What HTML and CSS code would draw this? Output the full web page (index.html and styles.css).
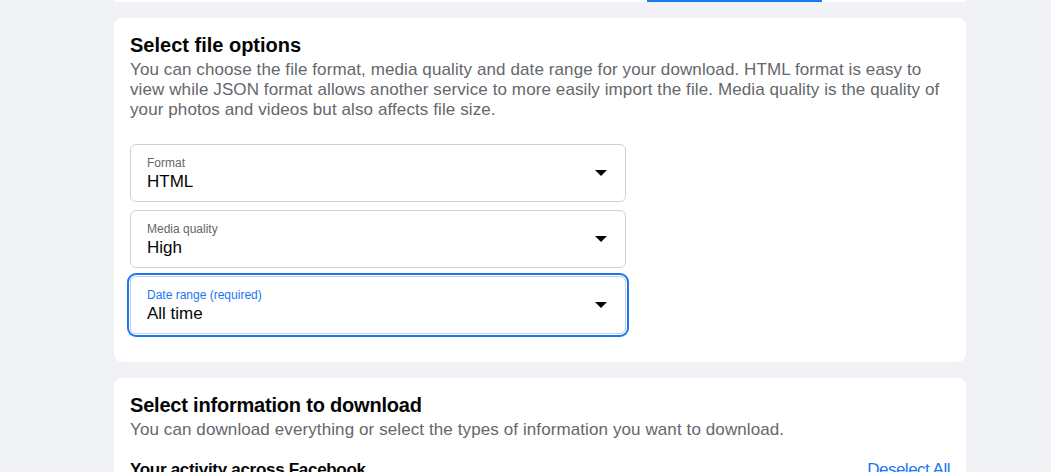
FILE: index.html
```html
<!DOCTYPE html>
<html>
<head>
<meta charset="utf-8">
<link rel="stylesheet" href="styles.css">
</head>
<body>
<div class="page">
  <div class="card top-card">
    <div class="tabs"><div class="tab-indicator"></div></div>
  </div>
  <div class="card section">
    <h2 class="title">Select file options</h2>
    <p class="desc">You can choose the file format, media quality and date range for your download. HTML format is easy to view while JSON format allows another service to more easily import the file. Media quality is the quality of your photos and videos but also affects file size.</p>
    <div class="fields">
      <div class="select">
        <div class="select-text">
          <div class="label">Format</div>
          <div class="value">HTML</div>
        </div>
        <span class="caret"></span>
      </div>
      <div class="select">
        <div class="select-text">
          <div class="label">Media quality</div>
          <div class="value">High</div>
        </div>
        <span class="caret"></span>
      </div>
      <div class="select focused">
        <div class="select-text">
          <div class="label">Date range (required)</div>
          <div class="value">All time</div>
        </div>
        <span class="caret"></span>
      </div>
    </div>
  </div>
  <div class="card section second">
    <h2 class="title title-2">Select information to download</h2>
    <p class="desc">You can download everything or select the types of information you want to download.</p>
    <div class="group-head">
      <span class="group-title">Your activity across Facebook</span>
      <a class="link">Deselect All</a>
    </div>
  </div>
</div>
</body>
</html>
```
FILE: styles.css
```css
html, body {
  margin: 0;
  padding: 0;
  background: #f0f2f5;
  font-family: "Liberation Sans", Arial, sans-serif;
  color: #050505;
}
.page {
  margin-left: 114px;
  width: 852px;
  display: flex;
  flex-direction: column;
  gap: 16px;
}
.card {
  background: #fff;
  border-radius: 8px;
}
.top-card {
  height: 2px;
  border-radius: 0 0 8px 8px;
  overflow: hidden;
}
.tabs {
  display: flex;
  padding-left: 533px;
}
.tab-indicator {
  width: 175px;
  height: 2px;
  background: #1877f2;
}
.section {
  padding: 16px 16px 28px;
}
.title {
  margin: 0;
  font-size: 20px;
  line-height: 22px;
  font-weight: 700;
}
.desc {
  margin: 4px 0 0;
  font-size: 17px;
  line-height: 20px;
  color: #65676b;
  letter-spacing: 0.1px;
}
.fields {
  margin-top: 24px;
  width: 496px;
  display: flex;
  flex-direction: column;
  gap: 8px;
}
.select {
  box-sizing: border-box;
  height: 58px;
  border: 1px solid #ced0d4;
  border-radius: 6px;
  display: flex;
  align-items: center;
  padding: 0 18px 0 16px;
}
.select.focused {
  box-shadow: 0 0 0 1px #fff, 0 0 0 3px #1877f2;
}
.select-text {
  flex: 1;
  padding-top: 1px;
}
.label {
  font-size: 12px;
  line-height: 16px;
  color: #65676b;
}
.focused .label {
  color: #1877f2;
}
.value {
  font-size: 17px;
  line-height: 21px;
  color: #050505;
}
.caret {
  width: 0;
  height: 0;
  border-left: 6px solid transparent;
  border-right: 6px solid transparent;
  border-top: 6px solid #050505;
}
.title-2 {
  letter-spacing: -0.2px;
}
.group-head {
  margin-top: 20px;
  display: flex;
  justify-content: space-between;
  align-items: baseline;
}
.group-title {
  font-size: 17px;
  font-weight: 700;
  letter-spacing: -0.3px;
}
.link {
  font-size: 17px;
  color: #1877f2;
  letter-spacing: -0.5px;
}
```
